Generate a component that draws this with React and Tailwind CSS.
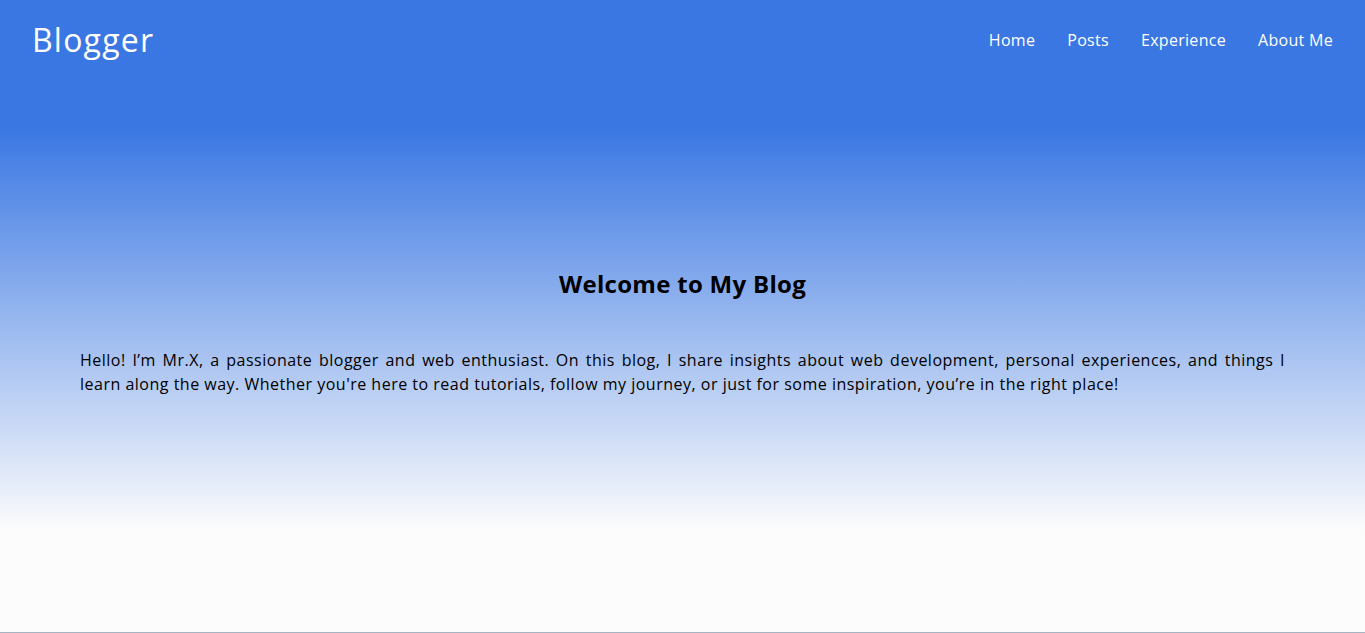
import React from 'react';

export default function App() {
  const font = { fontFamily: '"Open Sans", "Liberation Sans", sans-serif' };
  return (
    <div
      className="h-screen w-full overflow-y-scroll bg-[#fcfcfc] text-black [&::-webkit-scrollbar]:w-[14px] [&::-webkit-scrollbar]:bg-[#f1f1f1] [&::-webkit-scrollbar-thumb]:rounded-full [&::-webkit-scrollbar-thumb]:border-[3px] [&::-webkit-scrollbar-thumb]:border-solid [&::-webkit-scrollbar-thumb]:border-[#f1f1f1] [&::-webkit-scrollbar-thumb]:bg-[#858585]"
      style={font}
    >
      {/* Hero */}
      <div className="min-h-[632px] bg-[linear-gradient(to_bottom,#3a77e3_20%,#fcfcfc_84%)]">
        <header className="flex h-20 items-center justify-between px-8">
          <h1 className="text-[32px] font-medium text-white tracking-[1.2px]">Blogger</h1>
          <nav className="flex gap-8 text-[16px] text-white tracking-[0.3px]">
            <a href="#">Home</a>
            <a href="#">Posts</a>
            <a href="#">Experience</a>
            <a href="#">About Me</a>
          </nav>
        </header>
        <section className="px-20 pt-[188px]">
          <h2 className="mb-12 text-center text-[24px] leading-8 font-bold tracking-[0.3px]">Welcome to My Blog</h2>
          <p className="text-justify text-[16px] leading-6 tracking-[0.5px]">
            Hello! I’m Mr.X, a passionate blogger and web enthusiast. On this blog, I share insights about web development, personal experiences, and things I learn along the way. Whether you're here to read tutorials, follow my journey, or just for some inspiration, you’re in the right place!
          </p>
        </section>
      </div>

      {/* Posts */}
      <section className="min-h-[1960px] border-t border-[#a6b4c2]" />
    </div>
  );
}
